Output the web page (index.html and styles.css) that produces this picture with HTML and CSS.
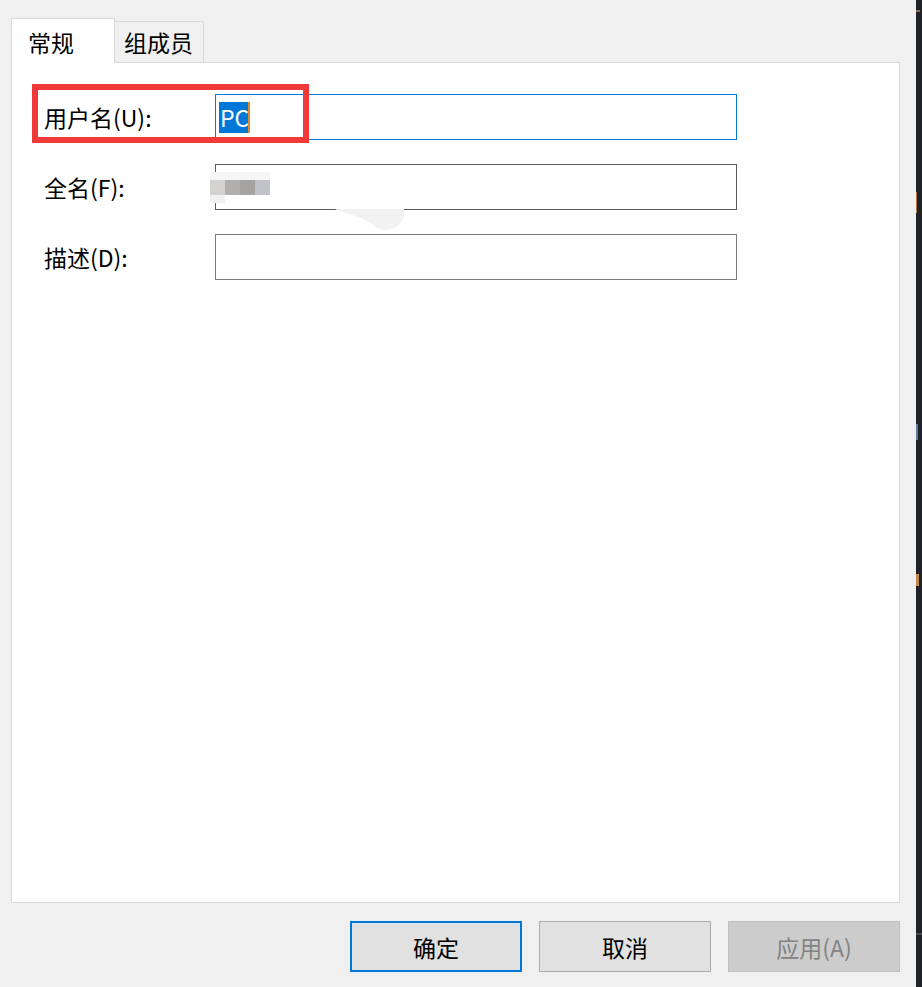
FILE: index.html
```html
<!DOCTYPE html>
<html lang="zh-CN">
<head>
  <meta charset="UTF-8" />
  <title>属性</title>
  <link rel="stylesheet" href="styles.css">
</head>
<body>
  <div class="screen">
    <div class="dialog">
      <div class="tabs">
        <div class="tab active">常规</div>
        <div class="tab">组成员</div>
      </div>

      <div class="panel">
        <div class="row">
          <label class="label">用户名(U):</label>
          <div class="field focused"><span class="sel">PC</span><span class="caret"></span></div>
        </div>
        <div class="row">
          <label class="label">全名(F):</label>
          <div class="field dark"></div>
          <div class="blur">
            <div class="blur-top"></div>
            <div class="blur-mid"><i class="b1"></i><i class="b2"></i><i class="b3"></i><i class="b4"></i></div>
            <div class="blur-bot"></div>
          </div>
          <svg class="smudge" width="70" height="22" viewBox="0 0 70 22">
            <path d="M0 0 H69 C70 9 66 19 52 21 C44 22 38 15 28 10 C18 5 8 4 0 0 Z" fill="#f2f2f2"/>
          </svg>
        </div>
        <div class="row">
          <label class="label">描述(D):</label>
          <div class="field"></div>
        </div>

        <div class="highlight"></div>
      </div>

      <div class="buttons">
        <button class="btn default">确定</button>
        <button class="btn">取消</button>
        <button class="btn disabled">应用(A)</button>
      </div>
    </div>

    <div class="edge">
      <span class="mark m0"></span>
      <span class="mark m1"></span>
      <span class="mark m2"></span>
      <span class="mark m3"></span>
      <span class="mark m4"></span>
    </div>
  </div>
</body>
</html>
```

FILE: styles.css
```css
html, body {
  margin: 0;
  padding: 0;
  height: 100%;
  background: #f0f0f0;
  font-family: "Noto Sans CJK SC", "Noto Sans", sans-serif;
  color: #000;
}
.screen {
  display: flex;
  height: 987px;
  overflow: hidden;
}
.dialog {
  width: 889px;
  padding: 18px 16px 0 11px;
}
.edge {
  position: relative;
  width: 6px;
  background: #202127;
}
.mark {
  position: absolute;
  left: 0;
  width: 1px;
}
.m0 { top: 10px; height: 2px; width: 4px; background: #8a7250; }
.m1 { top: 192px; height: 21px; background: #b07a3c; }
.m2 { top: 424px; height: 16px; width: 2px; background: #5b7aa6; }
.m3 { top: 574px; height: 12px; width: 3px; background: #c2874a; }
.m4 { top: 933px; height: 2px; width: 6px; background: #4a4b52; }

/* tabs */
.tabs {
  display: flex;
  align-items: flex-end;
  height: 44px;
  position: relative;
  z-index: 1;
}
.tab {
  box-sizing: border-box;
  height: 41px;
  padding: 0 10px 0 9px;
  border: 1px solid #d9d9d9;
  border-bottom: none;
  background: #f0f0f0;
  font-size: 23px;
  line-height: 40px;
  margin-left: -1px;
}
.tab.active {
  height: 45px;
  width: 104px;
  margin-left: 0;
  margin-bottom: -1px;
  padding: 0 0 0 16px;
  background: #fff;
  line-height: 46px;
  position: relative;
  z-index: 2;
}

/* panel */
.panel {
  position: relative;
  box-sizing: border-box;
  height: 841px;
  background: #fff;
  border: 1px solid #d9d9d9;
  padding: 31px 0 0 32px;
}
.row {
  position: relative;
  display: flex;
  align-items: center;
  height: 46px;
  margin-bottom: 24px;
}
.label {
  width: 171px;
  font-size: 23px;
}
.field {
  box-sizing: border-box;
  width: 522px;
  height: 46px;
  border: 1px solid #7a7a7a;
  background: #fff;
  display: flex;
  align-items: center;
  padding-left: 3px;
}
.field.dark {
  border-color: #5c5c5c;
}
.field.focused {
  border-color: #0078d7;
}
.sel {
  background: #0078d7;
  color: #fff;
  font-size: 23px;
  line-height: 31px;
  padding: 0 1px;
}
.caret {
  width: 2px;
  height: 31px;
  background: #e08a2c;
  margin-left: -2px;
}

/* pixelated name */
.blur {
  position: absolute;
  left: 166px;
  top: 8px;
  width: 60px;
}
.blur-top { height: 8px; background: #f6f6f6; }
.blur-mid { display: flex; height: 15px; }
.blur-mid i { width: 15px; }
.b1 { background: #d4d3d2; }
.b2 { background: #b0afae; }
.b3 { background: #a5a4a2; }
.b4 { background: #c0c2c7; }
.blur-bot { width: 15px; height: 8px; background: #f1f1f1; }
.smudge {
  position: absolute;
  left: 291px;
  top: 45px;
}

.highlight {
  position: absolute;
  left: 20px;
  top: 21px;
  width: 265px;
  height: 47px;
  border: 6px solid #f03a3a;
}

/* buttons */
.buttons {
  display: flex;
  justify-content: flex-end;
  gap: 17px;
  margin-top: 18px;
}
.btn {
  box-sizing: border-box;
  width: 172px;
  height: 51px;
  background: #e1e1e1;
  border: 1px solid #adadad;
  font-family: inherit;
  font-size: 23px;
  color: #000;
  padding: 0;
}
.btn.default {
  border: 2px solid #0078d7;
}
.btn.disabled {
  background: #cccccc;
  border-color: #bfbfbf;
  color: #838383;
}
```
